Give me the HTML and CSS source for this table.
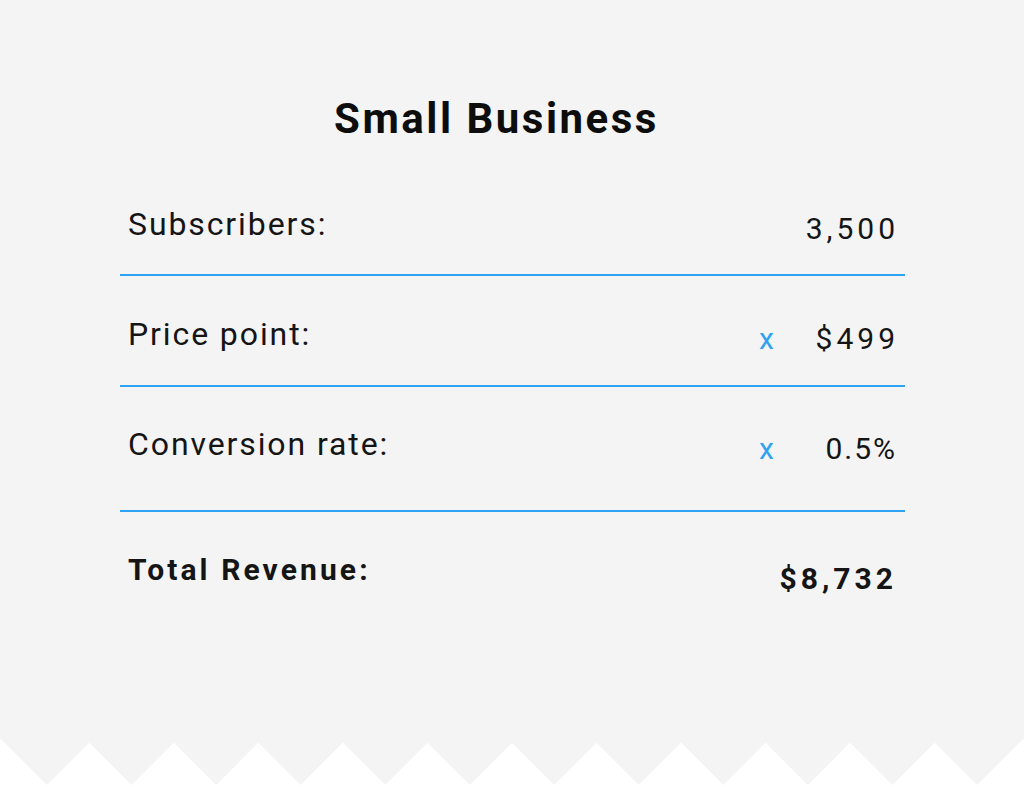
FILE: index.html
```html
<!DOCTYPE html>
<html>
<head>
<meta charset="utf-8">
<link rel="stylesheet" href="styles.css">
</head>
<body>
<div class="page">
  <div class="card">
    <h1 class="title">Small Business</h1>
    <div class="row row-1">
      <div class="label">Subscribers:</div>
      <div class="value"><span class="op"></span><span class="num">3,500</span></div>
    </div>
    <div class="row row-2">
      <div class="label">Price point:</div>
      <div class="value"><span class="op">x</span><span class="num">$499</span></div>
    </div>
    <div class="row row-3">
      <div class="label">Conversion rate:</div>
      <div class="value"><span class="op">x</span><span class="num num-tight">0.5%</span></div>
    </div>
    <div class="row row-total">
      <div class="label total-label">Total Revenue:</div>
      <div class="value total-value"><span class="num">$8,732</span></div>
    </div>
  </div>
</div>
<svg class="zigzag" viewBox="0 0 1024 48" width="1024" height="48" preserveAspectRatio="none">
  <polygon fill="#f4f4f4" points="0,0 0,-1 47,46 89.27,3.73 131.55,46 173.82,3.73 216.09,46 258.36,3.73 300.64,46 342.91,3.73 385.18,46 427.45,3.73 469.73,46 512,3.73 554.27,46 596.55,3.73 638.82,46 681.09,3.73 723.36,46 765.64,3.73 807.91,46 850.18,3.73 892.45,46 934.73,3.73 977,46 1024,-1 1024,0"/>
</svg>
</body>
</html>
```

FILE: styles.css
```css
html, body {
  margin: 0;
  padding: 0;
  background: #ffffff;
  overflow: hidden;
}
body {
  width: 1024px;
  height: 787px;
  font-family: Roboto, "Liberation Sans", sans-serif;
  color: #151515;
}
.page {
  background: #f4f4f4;
  height: 739px;
  padding-top: 94px;
  box-sizing: border-box;
}
.card {
  width: 785px;
  margin: 0 0 0 120px;
}
.title {
  margin: 0 0 62px 0;
  font-size: 42px;
  line-height: 50px;
  font-weight: 700;
  letter-spacing: 2.5px;
  text-align: center;
  padding-right: 32px;
  color: #0d0d0d;
}
.row {
  display: flex;
  justify-content: space-between;
  align-items: flex-start;
  padding-left: 8px;
  padding-right: 10px;
  border-bottom: 2px solid #2ea2f3;
}
.row-1 { padding-top: 0; padding-bottom: 27px; }
.row-2 { padding-top: 40px; padding-bottom: 28px; }
.row-3 { padding-top: 39px; padding-bottom: 43px; }
.row-total { padding-top: 40px; border-bottom: none; }
.label {
  font-size: 32px;
  line-height: 36px;
  letter-spacing: 1.9px;
  font-weight: 400;
}
.value {
  width: 136px;
  display: flex;
  justify-content: space-between;
  padding-top: 5px;
  font-size: 30px;
  line-height: 36px;
}
.op {
  color: #2ea2f3;
  width: 15px;
}
.num {
  letter-spacing: 4px;
  margin-right: -4px;
}
.num-tight {
  letter-spacing: 2px;
  margin-right: -2px;
}
.total-label {
  font-size: 30px;
  font-weight: 700;
  letter-spacing: 3.1px;
}
.total-value {
  justify-content: flex-end;
  padding-top: 9px;
  font-weight: 700;
  margin-right: 2px;
}
.zigzag {
  display: block;
}
```
